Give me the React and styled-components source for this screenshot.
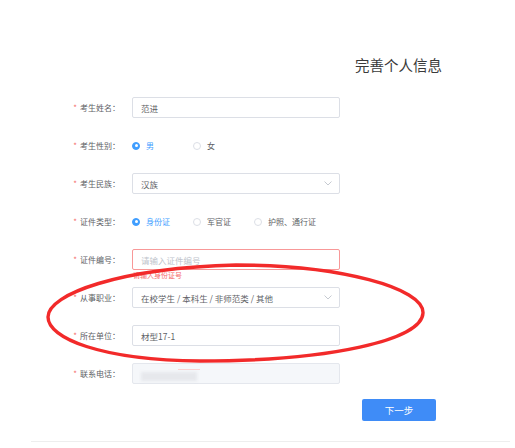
import React from 'react'
import styled, { createGlobalStyle } from 'styled-components'

const GlobalStyle = createGlobalStyle`
    html, body {
        margin: 0;
        padding: 0;
        background: #ffffff;
    }
    body {
        font-family: "Noto Sans CJK SC", "Noto Sans", sans-serif;
    }
`

const fields = [
    { label: '考生姓名', type: 'input', value: '范进' },
    { label: '考生性别', type: 'radio', options: ['男', '女'], checked: 0 },
    { label: '考生民族', type: 'select', value: '汉族' },
    { label: '证件类型', type: 'radio', options: ['身份证', '军官证', '护照、通行证'], checked: 0 },
    { label: '证件编号', type: 'input', placeholder: '请输入证件编号', error: '请输入身份证号' },
    { label: '从事职业', type: 'select', value: '在校学生 / 本科生 / 非师范类 / 其他' },
    { label: '所在单位', type: 'input', value: '材型17-1' },
    { label: '联系电话', type: 'disabled' },
]

function Chevron() {
    return (
        <svg width="8" height="5" viewBox="0 0 8 5">
            <polyline points="0.5,0.5 4,4 7.5,0.5" fill="none" stroke="#c0c4cc" strokeWidth="0.9" />
        </svg>
    )
}

function Field({ field }) {
    if (field.type === 'radio') {
        return (
            <RadioGroup>
                {field.options.map((opt, i) => (
                    <RadioItem key={opt}>
                        <RadioDot checked={i === field.checked} />
                        <RadioText checked={i === field.checked}>{opt}</RadioText>
                    </RadioItem>
                ))}
            </RadioGroup>
        )
    }
    if (field.type === 'select') {
        return (
            <InputBox>
                <InputText>{field.value}</InputText>
                <Chevron />
            </InputBox>
        )
    }
    if (field.type === 'disabled') {
        return (
            <InputBox disabled>
                <Blurred />
                <BlurredRed />
            </InputBox>
        )
    }
    return (
        <InputBox error={!!field.error}>
            {field.value
                ? <InputText>{field.value}</InputText>
                : <InputText placeholder>{field.placeholder}</InputText>}
            {field.error && <ErrorText>{field.error}</ErrorText>}
        </InputBox>
    )
}

function App() {
    return (
        <Page>
            <GlobalStyle />
            <Title>完善个人信息</Title>
            <Form>
                {fields.map(f => (
                    <Row key={f.label}>
                        <Label><Star>*</Star>{f.label}：</Label>
                        <Field field={f} />
                    </Row>
                ))}
            </Form>
            <Footer>
                <NextButton>下一步</NextButton>
            </Footer>
            <Divider />
            <Annotation width="515" height="448" viewBox="0 0 515 448">
                <path
                    d="M236 265 C 340 265, 424 288, 423 313 C 422 340, 330 361, 200 361 C 100 360, 48 338, 48 317 C 48 294, 120 268, 236 265 Z"
                    fill="none"
                    stroke="#f22a2a"
                    strokeWidth="3.4"
                />
            </Annotation>
        </Page>
    )
}

export default App

const Page = styled.div`
    position: relative;
    width: 515px;
    height: 448px;
    padding-top: 54px;
    box-sizing: border-box;
    overflow: hidden;
`

const Title = styled.div`
    padding-left: 355px;
    height: 22px;
    line-height: 22px;
    font-size: 14.5px;
    color: #3a3a3a;
    margin-bottom: 21px;
`

const Form = styled.div`
    display: flex;
    flex-direction: column;
    gap: 17px;
`

const Row = styled.div`
    display: flex;
    align-items: center;
    height: 21px;
`

const Label = styled.div`
    width: 120px;
    margin-right: 12px;
    text-align: right;
    font-size: 8px;
    color: #606266;
    white-space: nowrap;
`

const Star = styled.span`
    color: #f56c6c;
    margin-right: 3px;
`

const InputBox = styled.div`
    position: relative;
    box-sizing: border-box;
    width: 208px;
    height: 21px;
    display: flex;
    align-items: center;
    justify-content: space-between;
    padding: 0 7px 0 8px;
    border: 1px solid ${p => p.error ? '#f89898' : p.disabled ? '#e4e7ed' : '#dcdfe6'};
    background: ${p => p.disabled ? '#f5f7fa' : '#ffffff'};
    border-radius: 2px;
`

const InputText = styled.span`
    font-size: 8.5px;
    color: ${p => p.placeholder ? '#c0c4cc' : '#606266'};
    white-space: nowrap;
`

const ErrorText = styled.span`
    position: absolute;
    left: 0;
    top: 100%;
    margin-top: 2px;
    font-size: 7px;
    line-height: 9px;
    color: #f56c6c;
    white-space: nowrap;
`

const Blurred = styled.span`
    display: block;
    width: 56px;
    height: 9px;
    margin-top: 5px;
    background: #e6e8ec;
    filter: blur(1.5px);
`

const BlurredRed = styled.span`
    position: absolute;
    left: 45px;
    top: 5px;
    width: 22px;
    height: 1px;
    background: #fbd0d0;
    filter: blur(0.6px);
`

const RadioGroup = styled.div`
    display: flex;
    align-items: center;
`

const RadioItem = styled.div`
    min-width: 61px;
    display: flex;
    align-items: center;
    gap: 6px;
`

const RadioDot = styled.span`
    box-sizing: border-box;
    width: 8px;
    height: 8px;
    border-radius: 50%;
    border: 1px solid ${p => p.checked ? '#409eff' : '#dcdfe6'};
    background: ${p => p.checked ? '#409eff' : '#ffffff'};
    display: flex;
    align-items: center;
    justify-content: center;
    &::after {
        content: '';
        width: 3px;
        height: 3px;
        border-radius: 50%;
        background: #ffffff;
        display: ${p => p.checked ? 'block' : 'none'};
    }
`

const RadioText = styled.span`
    font-size: 8px;
    color: ${p => p.checked ? '#409eff' : '#606266'};
    white-space: nowrap;
`

const Footer = styled.div`
    display: flex;
    padding-left: 362px;
    margin-top: 15px;
`

const NextButton = styled.button`
    width: 74px;
    height: 22px;
    border: none;
    border-radius: 2px;
    background: #3f8cf7;
    color: #ffffff;
    font-family: "Noto Sans CJK SC", sans-serif;
    font-size: 9.5px;
    padding: 0;
    cursor: pointer;
`

const Divider = styled.div`
    margin: 20px 5px 0 31px;
    border-top: 1px solid #eeeeee;
`

const Annotation = styled.svg`
    position: absolute;
    left: 0;
    top: 0;
    pointer-events: none;
`
